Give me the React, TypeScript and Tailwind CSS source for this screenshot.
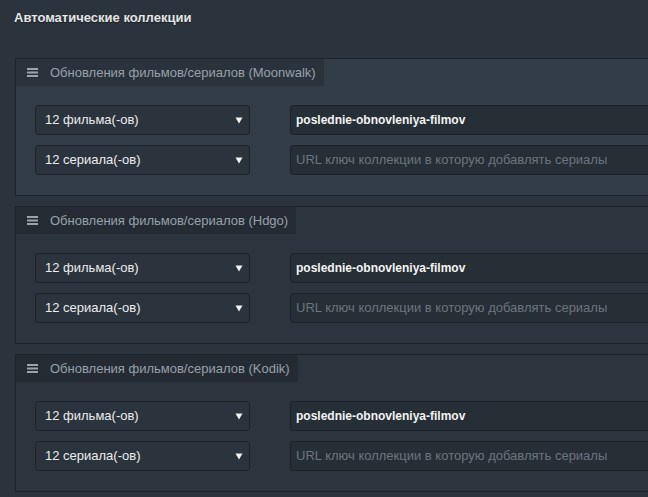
import React from 'react';

interface Collection {
  source: string;
  active?: boolean;
}

const collections: Collection[] = [
  { source: 'Moonwalk', active: true },
  { source: 'Hdgo' },
  { source: 'Kodik' },
];

const Arrow = () => (
  <svg width="8" height="7" viewBox="0 0 8 7" className="shrink-0">
    <polygon points="0.5,0.5 7.5,0.5 4,6.5" fill="#f2f2f2" />
  </svg>
);

const Hamburger = () => (
  <svg width="11" height="9" viewBox="0 0 11 9" className="shrink-0">
    <rect x="0" y="0" width="11" height="2" fill="#9ba3ab" />
    <rect x="0" y="3.5" width="11" height="2" fill="#9ba3ab" />
    <rect x="0" y="7" width="11" height="2" fill="#9ba3ab" />
  </svg>
);

const FakeSelect = ({ label }: { label: string }) => (
  <div className="flex items-center justify-between w-[215px] h-[30px] pl-[9px] pr-[6px] bg-[#2b343d] border border-[#1c2228] rounded-[3px] text-[13px] text-[#ececec]">
    <span>{label}</span>
    <Arrow />
  </div>
);

const Panel = ({ source, active }: Collection) => {
  return (
    <div
      className={
        'border border-[#1d2329] w-[660px] ' +
        (active ? 'bg-[#333d47]' : 'bg-[#2c353e]')
      }
    >
      {/* tab header */}
      <div
        className={
          'inline-flex items-center gap-[12px] h-[27px] pl-[11px] pr-[8px] text-[13px] text-[#98a1a9] ' +
          (active ? 'bg-[#2a323b]' : 'bg-[#242b33]')
        }
      >
        <Hamburger />
        <span>Обновления фильмов/сериалов ({source})</span>
      </div>

      <div className="flex flex-col gap-[10px] pt-[19px] pb-[20px] pl-[19px]">
        <div className="flex items-center gap-[40px]">
          <FakeSelect label="12 фильма(-ов)" />
          <div className="flex items-center flex-1 h-[30px] pl-[5px] bg-[#262e36] border border-[#1c2228] rounded-[3px] text-[12px] font-bold text-[#f4f4f4]">
            poslednie-obnovleniya-filmov
          </div>
        </div>
        <div className="flex items-center gap-[40px]">
          <FakeSelect label="12 сериала(-ов)" />
          <div className="flex items-center flex-1 h-[30px] pl-[5px] bg-[#262e36] border border-[#1c2228] rounded-[3px] text-[13px] text-[#6c757d]">
            URL ключ коллекции в которую добавлять сериалы
          </div>
        </div>
      </div>
    </div>
  );
};

export default function App() {
  return (
    <div
      className="w-[648px] h-[497px] overflow-hidden bg-[#2b333c]"
      style={{ fontFamily: '"Liberation Sans", Arial, sans-serif' }}
    >
      <h3 className="pt-[10px] pl-[14px] text-[13px] font-bold text-[#e6e6e6] leading-[16px] [text-shadow:0_1px_1px_rgba(0,0,0,0.4)]">
        Автоматические коллекции
      </h3>

      <div className="flex flex-col gap-[10px] mt-[32px] pl-[15px]">
        {collections.map((c) => (
          <Panel key={c.source} {...c} />
        ))}
      </div>
    </div>
  );
}
